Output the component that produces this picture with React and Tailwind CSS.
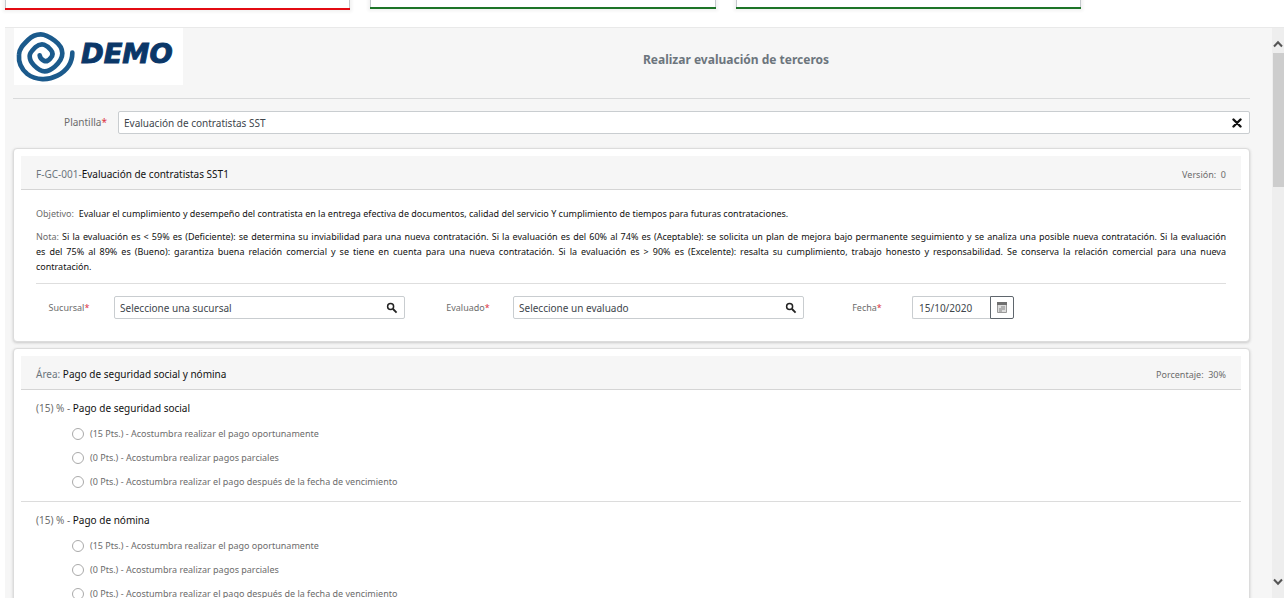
import React, { useState } from 'react';

const tabs = [
  { id: 1, color: 'border-[#e30b13] h-[10px]' },
  { id: 2, color: 'border-[#1d7427] h-[9px]' },
  { id: 3, color: 'border-[#1d7427] h-[9px]' },
];

const opciones = [
  { puntos: 15, texto: 'Acostumbra realizar el pago oportunamente' },
  { puntos: 0, texto: 'Acostumbra realizar pagos parciales' },
  { puntos: 0, texto: 'Acostumbra realizar el pago después de la fecha de vencimiento' },
];

const preguntas = [
  { id: 'seguridad', peso: 15, titulo: 'Pago de seguridad social', opciones },
  { id: 'nomina', peso: 15, titulo: 'Pago de nómina', opciones },
];

const Logo = () => (
  <svg viewBox="0 0 507 171" className="block h-[57px] w-[169px] bg-white" role="img" aria-label="DEMO">
    <path
      d="M175 74 C175 104 158 128 130 143 C104 157 66 158 40 138 C22 123 13 102 15 80 C16 62 26 52 42 36 C56 22 68 19 80 19 C94 19 106 26 122 38 C138 50 145 60 145 76 C145 92 136 104 122 116 C110 126 102 130 92 130 C80 130 72 124 60 112 C50 102 47 94 47 84 C47 74 54 68 64 58 C74 49 82 48 90 50 C98 53 104 58 110 65 C118 74 117 82 110 90 C104 98 98 101 91 99 C83 96 78 91 77 82"
      fill="none"
      stroke="#1b5a8c"
      strokeWidth="14"
      strokeLinecap="round"
      strokeLinejoin="round"
    />
    <text x="201" y="106" fontFamily="DejaVu Sans" fontWeight="700" fontStyle="italic" fontSize="82" fill="#0b3768" stroke="#0b3768" strokeWidth="3">
      DEMO
    </text>
  </svg>
);

const SearchIcon = () => (
  <svg viewBox="0 0 12 12" className="h-3 w-3">
    <circle cx="4.6" cy="4.6" r="3" fill="none" stroke="#222" strokeWidth="1.5" />
    <path d="M7 7L10.6 10.6" stroke="#222" strokeWidth="1.8" />
  </svg>
);

const CalendarIcon = () => (
  <svg viewBox="0 0 10 11" className="h-[11px] w-[10px]">
    <path d="M0.5 1.5h9v9h-9z" fill="#dcdcdc" stroke="#9a9a9a" />
    <path d="M0 0h10v3H0z" fill="#6f6f6f" />
    <path d="M4 5h4M2 7h6M2 9h3" stroke="#858585" />
  </svg>
);

const Required = () => <span className="text-[#dc3545]">*</span>;

const SearchField = ({ id, label, placeholder }) => (
  <div className="flex items-center gap-3 pr-[23px]">
    <label htmlFor={id} className="w-[66px] text-center text-[9px] text-[#6c6c6c]">
      {label}<Required />
    </label>
    <div className="flex h-[23px] min-w-0 flex-1 items-center rounded-xs border border-[#c9cdd0] bg-white pr-[6px] pl-[5px]">
      <input
        id={id}
        placeholder={placeholder}
        className="min-w-0 flex-1 pt-[2px] text-[10px] text-[#40464c] outline-none placeholder:text-[#40464c]"
      />
      <button type="button" aria-label="Buscar">
        <SearchIcon />
      </button>
    </div>
  </div>
);

const CardHeader = ({ children, right }) => (
  <div className="flex h-[34px] items-center justify-between border-b border-[#d5d5d5] bg-[#f6f6f6] px-[15px] pt-1">
    <h3 className="text-[10px] text-[#6c757d]">{children}</h3>
    <span className="text-[9px] whitespace-pre text-[#6c6c6c]">{right}</span>
  </div>
);

const App = () => {
  const [plantilla, setPlantilla] = useState('Evaluación de contratistas SST');
  const [fecha, setFecha] = useState('15/10/2020');
  const [respuestas, setRespuestas] = useState({});

  const handleRespuesta = (id, index) => {
    setRespuestas({ ...respuestas, [id]: index });
  };

  return (
    <div className="flex h-screen flex-col overflow-hidden bg-white pr-[3px] pb-[3px] pl-[5px] font-['Noto_Sans',sans-serif] text-[#212529]">
      {/* Tabs */}
      <div className="flex h-[27px] shrink-0 items-start gap-5">
        {tabs.map(tab => (
          <div key={tab.id} className={`w-[27%] border-b-2 shadow-[0_0_3px_2px_#f2f2f2] ${tab.color}`}>
            <div className="h-full border-x border-[#c4c8cc]" />
          </div>
        ))}
      </div>

      {/* Main Content */}
      <div className="flex min-h-0 flex-1 border-t border-[#e9e9e9] bg-[#f6f6f6]">
        <main className="min-w-0 flex-1 overflow-hidden pr-[22px] pl-2">
          {/* Header */}
          <header className="grid grid-cols-[170px_1fr] border-b border-[#d9dadb] pb-[13px] pl-px">
            <Logo />
            <h2 className="self-center pt-[6px] pl-[38px] text-center text-[12px] font-bold text-[#6c757d]">
              Realizar evaluación de terceros
            </h2>
          </header>

          {/* Plantilla */}
          <div className="flex items-center gap-[11px] pt-3 pb-[14px]">
            <label htmlFor="plantilla" className="w-[94px] text-right text-[10px] text-[#6c6c6c]">
              Plantilla<Required />
            </label>
            <div className="flex h-[23px] flex-1 items-center rounded-xs border border-[#c9cdd0] bg-white pr-[7px] pl-[5px]">
              <input
                id="plantilla"
                value={plantilla}
                onChange={e => setPlantilla(e.target.value)}
                className="min-w-0 flex-1 pt-[2px] text-[10px] text-[#40464c] outline-none"
              />
              <button type="button" aria-label="Limpiar" onClick={() => setPlantilla('')}>
                <svg viewBox="0 0 10 10" className="h-[10px] w-[10px]">
                  <path d="M1.5 1.5L8.5 8.5M8.5 1.5L1.5 8.5" stroke="#111" strokeWidth="2.4" strokeLinecap="round" />
                </svg>
              </button>
            </div>
          </div>

          {/* Datos de la evaluacion */}
          <section className="rounded-sm border border-[#dcdcdc] bg-white pt-[7px] pr-2 pb-[22px] pl-[7px] shadow-[0_1px_3px_#c8c8c8]">
            <CardHeader right={'Versión:  0'}>
              F-GC-001-<span className="text-[#111]">Evaluación de contratistas SST1</span>
            </CardHeader>
            <div className="px-[15px] pt-4 text-[9px] leading-[15px] text-[#111]">
              <p className="mb-2">
                <span className="text-[#6c6c6c]">Objetivo:</span>&nbsp; Evaluar el cumplimiento y desempeño del contratista en la
                entrega efectiva de documentos, calidad del servicio Y cumplimiento de tiempos para futuras contrataciones.
              </p>
              <p className="text-justify">
                <span className="block [text-align-last:justify]">
                  <span className="text-[#6c6c6c]">Nota:</span> Si la evaluación es &lt; 59% es (Deficiente): se determina
                  su inviabilidad para una nueva contratación. Si la evaluación es del 60% al 74% es (Aceptable): se solicita
                  un plan de mejora bajo permanente seguimiento y se analiza una posible nueva contratación. Si la evaluación
                </span>{' '}
                <span className="block [text-align-last:justify]">
                  es del 75% al 89% es (Bueno): garantiza buena relación comercial y se tiene en cuenta para una nueva
                  contratación. Si la evaluación es &gt; 90% es (Excelente): resalta su cumplimiento, trabajo honesto y
                  responsabilidad. Se conserva la relación comercial para una nueva
                </span>{' '}
                contratación.
              </p>
              <form className="mt-[9px] grid grid-cols-3 gap-[7px] border-t border-[#dedede] pt-3">
                <SearchField id="sucursal" label="Sucursal" placeholder="Seleccione una sucursal" />
                <SearchField id="evaluado" label="Evaluado" placeholder="Seleccione un evaluado" />
                <div className="flex items-center gap-3">
                  <label htmlFor="fecha" className="w-[66px] text-center text-[9px] text-[#6c6c6c]">
                    Fecha<Required />
                  </label>
                  <div className="flex h-[23px]">
                    <input
                      id="fecha"
                      value={fecha}
                      onChange={e => setFecha(e.target.value)}
                      className="w-[78px] rounded-l-xs border border-r-0 border-[#c9cdd0] px-[6px] pt-[2px] text-[10px] text-[#40464c] outline-none"
                    />
                    <button
                      type="button"
                      aria-label="Abrir calendario"
                      className="flex w-6 items-center justify-center rounded-r-xs border border-[#5f666d]"
                    >
                      <CalendarIcon />
                    </button>
                  </div>
                </div>
              </form>
            </div>
          </section>

          {/* Area */}
          <section className="mt-[6px] rounded-sm border border-[#dcdcdc] bg-white pt-[7px] pr-2 pl-[7px] shadow-[0_1px_3px_#c8c8c8]">
            <CardHeader right={'Porcentaje:  30%'}>
              Área: <span className="text-[#111]">Pago de seguridad social y nómina</span>
            </CardHeader>
            {preguntas.map(pregunta => (
              <fieldset key={pregunta.id} className="border-b border-[#dcdcdc] px-[15px] pt-[10px] pb-[7px]">
                <legend className="contents">
                  <span className="block h-[22px] text-[10px] leading-4 text-[#6c6c6c]">
                    ({pregunta.peso}) % - <span className="text-[#111]">{pregunta.titulo}</span>
                  </span>
                </legend>
                {pregunta.opciones.map((opcion, index) => (
                  <label key={index} className="flex h-6 items-center gap-[6px] pl-9 text-[9px] text-[#6c6c6c]">
                    <input
                      type="radio"
                      name={pregunta.id}
                      checked={respuestas[pregunta.id] === index}
                      onChange={() => handleRespuesta(pregunta.id, index)}
                      className="h-3 w-3 appearance-none rounded-full border border-[#aaa] bg-white checked:border-4"
                    />
                    ({opcion.puntos} Pts.) - {opcion.texto}
                  </label>
                ))}
              </fieldset>
            ))}
          </section>
        </main>

        {/* Scrollbar */}
        <div className="flex w-3 flex-col items-center bg-[#eeeeee] pt-3 pb-3">
          <svg viewBox="0 0 10 8" className="h-2 w-[10px]">
            <path d="M1 6.5L5 2.2L9 6.5" fill="none" stroke="#555" strokeWidth="2" />
          </svg>
          <div className="mt-[5px] h-[134px] w-[11px] bg-[#cdcdcd]" />
          <svg viewBox="0 0 10 8" className="mt-auto h-2 w-[10px]">
            <path d="M1 1.5L5 5.8L9 1.5" fill="none" stroke="#555" strokeWidth="2" />
          </svg>
        </div>
      </div>
    </div>
  );
};

export default App;
